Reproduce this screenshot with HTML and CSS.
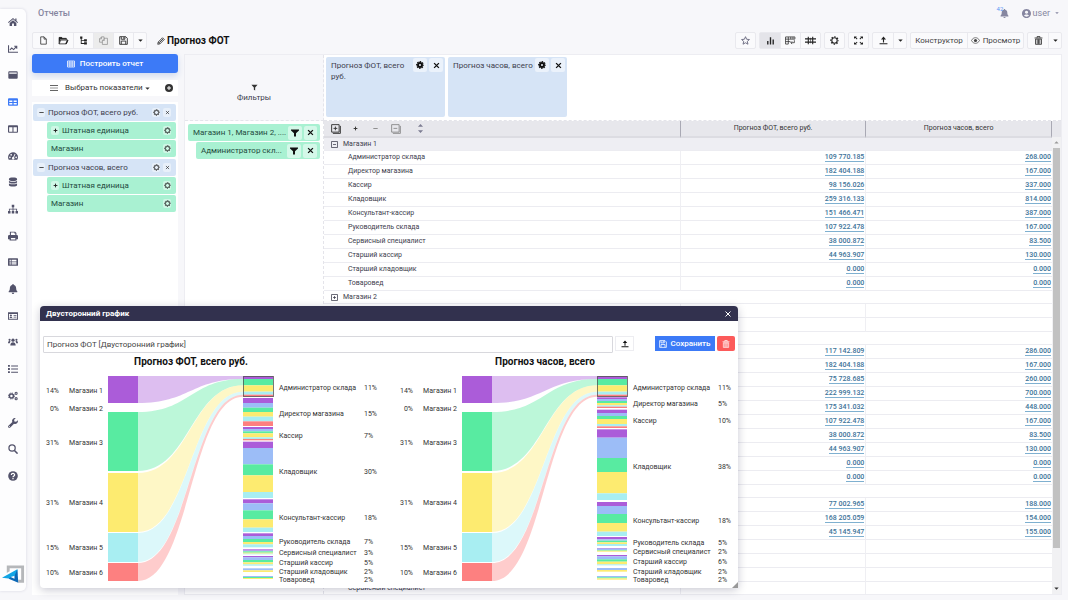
FILE: index.html
```html
<!DOCTYPE html>
<html lang="ru">
<head>
<meta charset="utf-8">
<title>Отчеты</title>
<link rel="stylesheet" href="styles.css">
</head>
<body>
<svg class="sprite" aria-hidden="true">
  <symbol id="home" viewBox="0 0 16 16"><path d="M8 1.6 0 8.3l1 1.2L8 3.7l7 5.8 1-1.2-2.4-2V2.2h-2v2.4zM8 5 2.6 9.5V14.500h3.900v-4h3v4h3.900V9.500z"/></symbol>
  <symbol id="line" viewBox="0 0 16 16"><path d="M0 2h1.700v10.300H16V14H0z"/><path fill="none" stroke="currentColor" stroke-width="1.700" d="m3 9.500 3-3 3 2.500 4-4.500M10 3.500h4v4"/></symbol>
  <symbol id="window" viewBox="0 0 16 16"><path fill-rule="evenodd" d="M2 2h12a1.500 1.500 0 0 1 1.500 1.500v9A1.500 1.500 0 0 1 14 14H2a1.500 1.500 0 0 1-1.500-1.500v-9A1.500 1.500 0 0 1 2 2zm0 2v2h12V4z"/></symbol>
  <symbol id="table" viewBox="0 0 16 16"><path fill-rule="evenodd" d="M1.500 2h13A1.500 1.500 0 0 1 16 3.500v9a1.500 1.500 0 0 1-1.500 1.500h-13A1.500 1.500 0 0 1 0 12.500v-9A1.500 1.500 0 0 1 1.500 2zM2 5.500v2.300h5V5.500zm7 0v2.300h5V5.500zm-7 4V12h5V9.500zm7 0V12h5V9.500z"/></symbol>
  <symbol id="columns" viewBox="0 0 16 16"><path fill-rule="evenodd" d="M1.500 2h13A1.500 1.500 0 0 1 16 3.500v9a1.500 1.500 0 0 1-1.500 1.500h-13A1.500 1.500 0 0 1 0 12.500v-9A1.500 1.500 0 0 1 1.500 2zM1.800 5v7.300h5.300V5zm7 0v7.300h5.400V5z"/></symbol>
  <symbol id="gauge" viewBox="0 0 16 16"><path fill-rule="evenodd" d="M8 2a8 8 0 0 1 8 8 8 8 0 0 1-1.200 4H1.200A8 8 0 0 1 8 2zM3 8.800a1.200 1.200 0 1 0 .1 0zM5 4.800a1.200 1.200 0 1 0 .1 0zM13 8.800a1.200 1.200 0 1 0 .1 0zM10.800 4.500 8.300 9.500a2 2 0 1 0 1.300.5l2.300-5z"/></symbol>
  <symbol id="db" viewBox="0 0 16 16"><path d="M1.500 3c0-3 13-3 13 0v1.300c0 2.600-13 2.600-13 0zM1.500 6.200c3 1.800 10 1.800 13 0v2.300c0 2.600-13 2.600-13 0zM1.500 10.400c3 1.800 10 1.800 13 0V13c0 3-13 3-13 0z"/></symbol>
  <symbol id="sitemap" viewBox="0 0 16 16"><path d="M6 1h4v4H6zM0 11h4v4H0zM6 11h4v4H6zM12 11h4v4h-4zM7.300 5h1.400v6H7.300zM1.500 7.500h13V11h-1.300V8.900H2.800V11H1.500z"/></symbol>
  <symbol id="print" viewBox="0 0 16 16"><path fill-rule="evenodd" d="M3 1h8.500L13.500 3v3.500H14a2 2 0 0 1 2 2V13h-2.500v2h-11v-2H0V8.500a2 2 0 0 1 2-2h1zm1.700 1.500v4h7V4H10.200V2.500zm0 8.500v2.500h7V11z"/></symbol>
  <symbol id="listbox" viewBox="0 0 16 16"><path fill-rule="evenodd" d="M1 2h14a1 1 0 0 1 1 1v10a1 1 0 0 1-1 1H1a1 1 0 0 1-1-1V3a1 1 0 0 1 1-1zm1.500 2.500v1.800h2V4.500zm3.300 0v1.800h7.700V4.500zM2.500 7.200V9h2V7.200zm3.300 0V9h7.700V7.200zM2.500 10v1.800h2V10zm3.300 0v1.800h7.700V10z"/></symbol>
  <symbol id="bell" viewBox="0 0 16 16"><path d="M7 0h2v1.500c2.500.5 4 2.200 4 5 0 3 .8 4 1.700 5 .8 1 .3 1.800-.7 1.800H2c-1 0-1.500-.9-.7-1.800C2.200 10.500 3 9.500 3 6.500c0-2.800 1.500-4.500 4-5zM6 14h4a2 2 0 0 1-4 0z"/></symbol>
  <symbol id="idcard" viewBox="0 0 16 16"><path fill-rule="evenodd" d="M0 2h16v12H0zm1.500 2.800v7.700h13V4.800zM4.700 5.500a1.600 1.600 0 1 1-.1 0zM2.500 11c0-2 4.400-2 4.400 0zM9 6.200h4.500v1.300H9zM9 9h4.500v1.300H9z"/></symbol>
  <symbol id="users" viewBox="0 0 16 16"><circle cx="8" cy="5" r="2.600"/><circle cx="2.500" cy="4.500" r="1.700"/><circle cx="13.500" cy="4.500" r="1.700"/><path d="M3.700 13.500c0-7 8.600-7 8.600 0zM0 10c0-4 3-4 4.300-2.700C3.300 8 3 9 2.800 10zM16 10c0-4-3-4-4.300-2.700 1 .7 1.300 1.700 1.500 2.700z"/></symbol>
  <symbol id="list" viewBox="0 0 16 16"><path d="M0 1.500h3v3H0zM0 6.500h3v3H0zM0 11.500h3v3H0zM5 2.300h11v1.500H5zM5 7.300h11v1.500H5zM5 12.300h11v1.500H5z"/></symbol>
  <symbol id="cogs" viewBox="0 0 16 16"><circle cx="5.500" cy="8" r="3.200" fill="none" stroke="currentColor" stroke-width="2.400"/><circle cx="5.500" cy="8" r="4.800" fill="none" stroke="currentColor" stroke-width="1.600" stroke-dasharray="1.900 1.870"/><circle cx="13" cy="3.700" r="1.700" fill="none" stroke="currentColor" stroke-width="1.700"/><circle cx="13" cy="12.300" r="1.700" fill="none" stroke="currentColor" stroke-width="1.700"/></symbol>
  <symbol id="wrench" viewBox="0 0 16 16"><path fill-rule="evenodd" d="M15.700 3.600A4.500 4.500 0 0 1 9.600 9l-6 6.200a2 2 0 0 1-2.900-2.800l6.200-6A4.500 4.500 0 0 1 12.400.3L9.800 2.900l.4 2.800 2.800.4zM2.200 12.900a.8.800 0 1 0 .1 0z"/></symbol>
  <symbol id="search" viewBox="0 0 16 16"><circle cx="6.500" cy="6.500" r="5" fill="none" stroke="currentColor" stroke-width="2"/><path stroke="currentColor" stroke-width="2.500" d="m10.300 10.300 5 5"/></symbol>
  <symbol id="help" viewBox="0 0 16 16"><circle cx="8" cy="8" r="7.700"/><path fill="none" stroke="#fff" stroke-width="2" d="M5.300 6.300c.2-3.200 5.500-3 5.300.1C10.500 8 8 8 8 10M8 11.200v2"/></symbol>
  <symbol id="file" viewBox="0 0 16 16"><path fill="none" stroke="currentColor" stroke-width="1.300" d="M3 1.500h6l4 4v9H3zM9 1.500v4h4"/></symbol>
  <symbol id="folder" viewBox="0 0 18 16"><path fill="none" stroke="currentColor" stroke-width="1.400" d="M1.200 14V2.500h4.500L7 4.200h7V7M1.200 14 4 7.200h13L14 14z"/><path d="M1 2h5l1.300 2H14v2H3.500L1 12zM12 14l3-6.500h2.500L14.500 14z"/></symbol>
  <symbol id="tree" viewBox="0 0 16 16"><path d="M2 1h4v4H4.700v2H9V5.800h5v4H9V8.600H4.700v4H9v-1.300h5v4H9V14H3.200V5H2z"/></symbol>
  <symbol id="copy" viewBox="0 0 16 16"><path fill="none" stroke="currentColor" stroke-width="1.200" d="M6 11H1V5l3.500-3.500H9V4M4.500 1.500V5H1M6 8l3.500-4H15v11H6zM9.500 4v4H6"/></symbol>
  <symbol id="save" viewBox="0 0 16 16"><path fill="none" stroke="currentColor" stroke-width="1.500" d="M1.200 1.200H12L14.800 4v10.800H1.200zM4 1.500v4.300h6.500V1.500M4 14.500V9h8v5.500M8.500 2v3"/></symbol>
  <symbol id="caret" viewBox="0 0 16 16"><path d="M1 4.500h14L8 12z"/></symbol>
  <symbol id="pencil" viewBox="0 0 16 16"><path fill="none" stroke="currentColor" stroke-width="1.500" d="M1.500 14.500 2.500 10 11 1.500 14.500 5 6 13.500zM3 10l3 3M5 11l7-7"/></symbol>
  <symbol id="star" viewBox="0 0 16 16"><path fill="none" stroke="currentColor" stroke-width="1.600" stroke-linejoin="round" d="m8 1.200 2 4.600 5 .5-3.800 3.300 1.200 5L8 12l-4.400 2.600 1.200-5L1 6.300l5-.5z"/></symbol>
  <symbol id="bars" viewBox="0 0 16 16"><path d="M2 9h2.400v6H2zM6.800 2h2.400v13H6.800zM11.600 6H14v9h-2.400z"/></symbol>
  <symbol id="pivot" viewBox="0 0 20 16"><path fill="none" stroke="currentColor" stroke-width="1.300" d="M1 1.500h17v4H1zM1 5v9.500h5V1.500M1 10h9M10.500 1.500v4M14.500 1.500v4M17 7.500V12h-6M13 9.500 10.500 12l2.500 2.500"/></symbol>
  <symbol id="grid" viewBox="0 0 20 16"><path fill="none" stroke="currentColor" stroke-width="2" d="M6 1v14M14 1v14M0 5h20M0 11h20"/><path stroke="currentColor" stroke-width="1" d="M10 3v10"/></symbol>
  <symbol id="gear" viewBox="0 0 16 16"><circle cx="8" cy="8" r="4.800" fill="none" stroke="currentColor" stroke-width="1.900"/><circle cx="8" cy="8" r="6.600" fill="none" stroke="currentColor" stroke-width="2" stroke-dasharray="2.600 2.583" stroke-dashoffset="1.300"/></symbol>
  <symbol id="gearbold" viewBox="0 0 16 16"><circle cx="8" cy="8" r="4" fill="none" stroke="currentColor" stroke-width="4"/><circle cx="8" cy="8" r="6.600" fill="none" stroke="currentColor" stroke-width="2.400" stroke-dasharray="3 2.183" stroke-dashoffset="1.500"/></symbol>
  <symbol id="expand" viewBox="0 0 16 16"><path d="M0 1h5L3.700 2.300l2.500 2.500L5 6 2.500 3.500 0 5zM16 1h-5l1.300 1.300-2.500 2.500L11 6l2.500-2.500L16 5zM0 15h5l-1.300-1.300 2.500-2.500L5 10l-2.500 2.500L0 11zM16 15h-5l1.300-1.300-2.500-2.500L11 10l2.500 2.500L16 11z"/></symbol>
  <symbol id="upload" viewBox="0 0 16 16"><path d="M8 1 3.500 6H7v5.500h2V6h3.500zM1 12.700h14v1.800H1z"/></symbol>
  <symbol id="eye" viewBox="0 0 18 16"><path fill="none" stroke="currentColor" stroke-width="1.400" d="M1 8c3.500-7.500 12.500-7.500 16 0-3.500 7.500-12.500 7.500-16 0z"/><circle cx="9" cy="8" r="3.200"/></symbol>
  <symbol id="trash" viewBox="0 0 16 16"><path fill="none" stroke="currentColor" stroke-width="1.400" d="M5.500 3V1h5v2M1 3.500h14M2.700 5.500h10.600v9.300H2.700zM5.700 6v8M8 6v8M10.300 6v8"/></symbol>
  <symbol id="user" viewBox="0 0 16 16"><path fill-rule="evenodd" d="M8 0a8 8 0 1 1-.1 0zM8 3a2.800 2.800 0 1 0 .1 0zM3.500 11.700c2 2.700 7 2.700 9 0C11 9 5 9 3.500 11.700z"/></symbol>
  <symbol id="menu" viewBox="0 0 16 16"><path d="M0 2.500h16v1.400H0zM0 7.300h16v1.400H0zM0 12h16v1.400H0z"/></symbol>
  <symbol id="pluscircle" viewBox="0 0 16 16"><circle cx="8" cy="8" r="8"/><path stroke="#fff" stroke-width="2" d="M8 4v8M4 8h8"/></symbol>
  <symbol id="plus" viewBox="0 0 16 16"><path stroke="currentColor" stroke-width="3" d="M8 2v12M2 8h12"/></symbol>
  <symbol id="minus" viewBox="0 0 16 16"><path stroke="currentColor" stroke-width="2.500" d="M1 8h14"/></symbol>
  <symbol id="close" viewBox="0 0 16 16"><path stroke="currentColor" stroke-width="3" d="m2.500 2.500 11 11M13.500 2.500l-11 11"/></symbol>
  <symbol id="thinclose" viewBox="0 0 16 16"><path stroke="currentColor" stroke-width="2" d="m3 3 10 10M13 3 3 13"/></symbol>
  <symbol id="funnel" viewBox="0 0 16 16"><path d="M0 1h16v2L10 8.500V15H6V8.500L0 3z"/></symbol>
  <symbol id="thinfunnel" viewBox="0 0 16 16"><path d="M1 1.500h14L9.500 8v7L6.500 13V8z"/></symbol>
  <symbol id="gridtable" viewBox="0 0 16 16"><path fill="none" stroke="currentColor" stroke-width="1.500" d="M1 2h14v12H1zM1 6h14M1 10h14M5.700 2v12M10.300 2v12"/></symbol>
  <symbol id="plusbox" viewBox="0 0 16 16"><path fill="none" stroke="currentColor" stroke-width="1.500" d="M1 1h12v12H1zM15 3v12H3M7 4v6M4 7h6"/></symbol>
  <symbol id="minusbox" viewBox="0 0 16 16"><path fill="none" stroke="currentColor" stroke-width="1.200" d="M1 1h12v12H1zM15 3v12H3M4 7h6"/></symbol>
  <symbol id="sort" viewBox="0 0 16 16"><path d="m8 0 4.500 5h-9zM8 16l4.500-5h-9z"/></symbol>
  <symbol id="collapse" viewBox="0 0 14 14"><path fill="none" stroke="currentColor" stroke-width="1.500" d="M1 1h12v12H1zM4 7h6"/></symbol>
  <symbol id="unfold" viewBox="0 0 14 14"><path fill="none" stroke="currentColor" stroke-width="1.500" d="M1 1h12v12H1zM4 7h6M7 4v6"/></symbol>
  <symbol id="brand" viewBox="0 0 24 20"><path fill="#b5b7ba" d="M5 1h18v18h-6v-3h3V4H8v3L5 9z"/><path fill="#12a5e5" d="M0 14 16 5v6l-7 2v2z"/><path fill="#0b67b5" d="m16 5 1 14-10-4 2-2 4 2v-3z"/></symbol>
</svg>

<div class="app">
  <aside class="sidebar">
    <nav class="nav" aria-label="Разделы">
      <a href="#"><svg><use href="#home"/></svg></a>
      <a href="#"><svg><use href="#line"/></svg></a>
      <a href="#"><svg><use href="#window"/></svg></a>
      <a href="#" class="current"><svg><use href="#table"/></svg></a>
      <a href="#"><svg><use href="#columns"/></svg></a>
      <a href="#"><svg><use href="#gauge"/></svg></a>
      <a href="#"><svg><use href="#db"/></svg></a>
      <a href="#"><svg><use href="#sitemap"/></svg></a>
      <a href="#"><svg><use href="#print"/></svg></a>
      <a href="#"><svg><use href="#listbox"/></svg></a>
      <a href="#"><svg><use href="#bell"/></svg></a>
      <a href="#"><svg><use href="#idcard"/></svg></a>
      <a href="#"><svg><use href="#users"/></svg></a>
      <a href="#"><svg><use href="#list"/></svg></a>
      <a href="#"><svg><use href="#cogs"/></svg></a>
      <a href="#"><svg><use href="#wrench"/></svg></a>
      <a href="#"><svg><use href="#search"/></svg></a>
      <a href="#"><svg><use href="#help"/></svg></a>
    </nav>
    <svg class="brand"><use href="#brand"/></svg>
  </aside>

  <main class="main">
    <header class="top">
      <a href="#" class="crumb">Отчеты</a>
      <div class="account">
        <button class="alerts" aria-label="Уведомления"><span class="count">42</span><svg><use href="#bell"/></svg></button>
        <button class="user"><svg><use href="#user"/></svg>user<svg class="tiny"><use href="#caret"/></svg></button>
      </div>
    </header>

    <div class="toolbar">
      <div class="group">
        <button aria-label="Новый"><svg><use href="#file"/></svg></button>
        <button aria-label="Открыть"><svg class="wide"><use href="#folder"/></svg></button>
        <button aria-label="Структура"><svg><use href="#tree"/></svg></button>
        <button aria-label="Копировать" disabled><svg><use href="#copy"/></svg></button>
        <button aria-label="Сохранить"><svg><use href="#save"/></svg></button>
        <button class="drop" aria-label="Еще"><svg><use href="#caret"/></svg></button>
      </div>
      <h1 class="title"><svg><use href="#pencil"/></svg>Прогноз ФОТ</h1>
      <div class="actions">
        <div class="group"><button class="muted" aria-label="Избранное"><svg><use href="#star"/></svg></button></div>
        <div class="group">
          <button class="active" aria-label="График"><svg><use href="#bars"/></svg></button>
          <button aria-label="Сводная"><svg class="wide"><use href="#pivot"/></svg></button>
          <button aria-label="Сетка"><svg class="wide"><use href="#grid"/></svg></button>
        </div>
        <div class="group"><button aria-label="Настройки"><svg><use href="#gear"/></svg></button></div>
        <div class="group"><button aria-label="Развернуть"><svg><use href="#expand"/></svg></button></div>
        <div class="group">
          <button aria-label="Выгрузить"><svg><use href="#upload"/></svg></button>
          <button class="drop" aria-label="Еще"><svg><use href="#caret"/></svg></button>
        </div>
        <div class="group">
          <button class="text">Конструктор</button>
          <button class="text"><svg><use href="#eye"/></svg>Просмотр</button>
        </div>
        <div class="group">
          <button aria-label="Удалить"><svg><use href="#trash"/></svg></button>
          <button class="drop" aria-label="Еще"><svg><use href="#caret"/></svg></button>
        </div>
      </div>
    </div>

    <div class="content">
      <section class="measures">
        <button class="build"><svg><use href="#gridtable"/></svg>Построить отчет</button>
        <div class="pick">
          <svg class="lines"><use href="#menu"/></svg>
          <button class="choose">Выбрать показатели<svg><use href="#caret"/></svg></button>
          <button class="add" aria-label="Добавить"><svg><use href="#pluscircle"/></svg></button>
        </div>
        <ul class="tree">
          <li class="node"><button class="chip" aria-label="Свернуть"><svg class="tiny"><use href="#minus"/></svg></button><span>Прогноз ФОТ, всего руб.</span><button class="chip" aria-label="Настроить"><svg><use href="#gear"/></svg></button><button class="chip" aria-label="Убрать"><svg class="tiny"><use href="#thinclose"/></svg></button></li>
          <li class="leaf"><button class="chip" aria-label="Развернуть"><svg class="tiny"><use href="#plus"/></svg></button><span>Штатная единица</span><button class="chip" aria-label="Настроить"><svg><use href="#gear"/></svg></button></li>
          <li class="leaf"><span>Магазин</span><button class="chip" aria-label="Настроить"><svg><use href="#gear"/></svg></button></li>
          <li class="node"><button class="chip" aria-label="Свернуть"><svg class="tiny"><use href="#minus"/></svg></button><span>Прогноз часов, всего</span><button class="chip" aria-label="Настроить"><svg><use href="#gear"/></svg></button><button class="chip" aria-label="Убрать"><svg class="tiny"><use href="#thinclose"/></svg></button></li>
          <li class="leaf"><button class="chip" aria-label="Развернуть"><svg class="tiny"><use href="#plus"/></svg></button><span>Штатная единица</span><button class="chip" aria-label="Настроить"><svg><use href="#gear"/></svg></button></li>
          <li class="leaf"><span>Магазин</span><button class="chip" aria-label="Настроить"><svg><use href="#gear"/></svg></button></li>
        </ul>
      </section>

      <section class="report">
        <div class="filterhead"><svg><use href="#thinfunnel"/></svg>Фильтры</div>
        <div class="cards">
          <div class="card"><span>Прогноз ФОТ, всего руб.</span><button aria-label="Настроить"><svg><use href="#gearbold"/></svg></button><button aria-label="Убрать"><svg class="x"><use href="#close"/></svg></button></div>
          <div class="card"><span>Прогноз часов, всего</span><button aria-label="Настроить"><svg><use href="#gearbold"/></svg></button><button aria-label="Убрать"><svg class="x"><use href="#close"/></svg></button></div>
        </div>
        <div class="filters">
          <div class="filter"><span>Магазин 1, Магазин 2, ....</span><button aria-label="Фильтр"><svg><use href="#funnel"/></svg></button><button aria-label="Убрать"><svg class="x"><use href="#close"/></svg></button></div>
          <div class="filter nested"><span>Администратор скл...</span><button aria-label="Фильтр"><svg><use href="#funnel"/></svg></button><button aria-label="Убрать"><svg class="x"><use href="#close"/></svg></button></div>
        </div>
        <div class="data">
          <table>
            <colgroup><col class="c1"><col class="c2"><col class="c3"></colgroup>
            <thead>
              <tr>
                <th><div class="tools">
                  <button aria-label="Развернуть все"><svg class="big"><use href="#plusbox"/></svg></button>
                  <button aria-label="Развернуть"><svg class="tiny"><use href="#plus"/></svg></button>
                  <button aria-label="Свернуть"><svg class="tiny soft"><use href="#minus"/></svg></button>
                  <button aria-label="Свернуть все"><svg class="big soft"><use href="#minusbox"/></svg></button>
                  <button aria-label="Сортировка"><svg class="sort"><use href="#sort"/></svg></button>
                </div></th>
                <th>Прогноз ФОТ, всего руб.</th>
                <th>Прогноз часов, всего</th>
              </tr>
            </thead>
            <tbody>
              <tr class="shop open"><td colspan="3"><svg><use href="#collapse"/></svg>Магазин 1</td></tr>
              <tr><td>Администратор склада</td><td><a href="#">109 770.185</a></td><td><a href="#">268.000</a></td></tr>
              <tr><td>Директор магазина</td><td><a href="#">182 404.188</a></td><td><a href="#">167.000</a></td></tr>
              <tr><td>Кассир</td><td><a href="#">98 156.026</a></td><td><a href="#">337.000</a></td></tr>
              <tr><td>Кладовщик</td><td><a href="#">259 316.133</a></td><td><a href="#">814.000</a></td></tr>
              <tr><td>Консультант-кассир</td><td><a href="#">151 466.471</a></td><td><a href="#">387.000</a></td></tr>
              <tr><td>Руководитель склада</td><td><a href="#">107 922.478</a></td><td><a href="#">167.000</a></td></tr>
              <tr><td>Сервисный специалист</td><td><a href="#">38 000.872</a></td><td><a href="#">83.500</a></td></tr>
              <tr><td>Старший кассир</td><td><a href="#">44 963.907</a></td><td><a href="#">130.000</a></td></tr>
              <tr><td>Старший кладовщик</td><td><a href="#">0.000</a></td><td><a href="#">0.000</a></td></tr>
              <tr><td>Товаровед</td><td><a href="#">0.000</a></td><td><a href="#">0.000</a></td></tr>
              <tr class="shop"><td colspan="3"><svg><use href="#unfold"/></svg>Магазин 2</td></tr>
              <tr><td></td><td></td><td></td></tr>
              <tr><td></td><td></td><td></td></tr>
              <tr class="shop"><td colspan="3"></td></tr>
              <tr><td></td><td><a href="#">117 142.809</a></td><td><a href="#">286.000</a></td></tr>
              <tr><td></td><td><a href="#">182 404.188</a></td><td><a href="#">167.000</a></td></tr>
              <tr><td></td><td><a href="#">75 728.685</a></td><td><a href="#">260.000</a></td></tr>
              <tr><td></td><td><a href="#">222 999.132</a></td><td><a href="#">700.000</a></td></tr>
              <tr><td></td><td><a href="#">175 341.032</a></td><td><a href="#">448.000</a></td></tr>
              <tr><td></td><td><a href="#">107 922.478</a></td><td><a href="#">167.000</a></td></tr>
              <tr><td></td><td><a href="#">38 000.872</a></td><td><a href="#">83.500</a></td></tr>
              <tr><td></td><td><a href="#">44 963.907</a></td><td><a href="#">130.000</a></td></tr>
              <tr><td></td><td><a href="#">0.000</a></td><td><a href="#">0.000</a></td></tr>
              <tr><td></td><td><a href="#">0.000</a></td><td><a href="#">0.000</a></td></tr>
              <tr class="shop"><td colspan="3"></td></tr>
              <tr><td></td><td><a href="#">77 002.965</a></td><td><a href="#">188.000</a></td></tr>
              <tr><td></td><td><a href="#">168 205.059</a></td><td><a href="#">154.000</a></td></tr>
              <tr><td></td><td><a href="#">45 145.947</a></td><td><a href="#">155.000</a></td></tr>
              <tr><td></td><td></td><td></td></tr>
              <tr><td></td><td></td><td></td></tr>
              <tr><td></td><td></td><td></td></tr>
              <tr><td>Сервисный специалист</td><td></td><td></td></tr>
            </tbody>
          </table>
          <div class="scroll"><svg class="up"><use href="#caret"/></svg><div class="track"><div class="thumb"></div></div><svg><use href="#caret"/></svg></div>
        </div>
      </section>
    </div>
  </main>
</div>

<section class="dialog" role="dialog" aria-labelledby="dialog-title">
  <header class="dialoghead"><h2 id="dialog-title">Двусторонний график</h2><button aria-label="Закрыть"><svg><use href="#thinclose"/></svg></button></header>
  <div class="form">
    <input type="text" aria-label="Название графика" value="Прогноз ФОТ [Двусторонний график]">
    <button class="export" aria-label="Выгрузить"><svg><use href="#upload"/></svg></button>
    <button class="store"><svg><use href="#save"/></svg>Сохранить</button>
    <button class="remove" aria-label="Удалить"><svg><use href="#trash"/></svg></button>
  </div>
  <div class="charts">
    <svg class="chart" id="payroll" viewBox="0 0 336 232"></svg>
    <svg class="chart" id="hours" viewBox="0 0 336 232"></svg>
  </div>
  <svg class="grip" viewBox="0 0 6 6"><path d="M6 0v6H0z"/></svg>
</section>
<script src="chart.js"></script>
</body>
</html>
```

FILE: styles.css
```css
* { box-sizing: border-box; }
body {
  margin: 0;
  height: 100vh;
  overflow: hidden;
  background: #f7f7fa;
  color: #3c3c4c;
  font: 8px/12px Roboto, "Liberation Sans", sans-serif;
}
button, input { font: inherit; color: inherit; }
button {
  display: inline-flex;
  align-items: center;
  justify-content: center;
  gap: 3px;
  padding: 0;
  border: 0;
  background: none;
  white-space: nowrap;
}
a { color: inherit; text-decoration: none; }
h1, h2, ul { margin: 0; padding: 0; font-size: inherit; }
svg { display: block; flex: none; width: 8px; height: 8px; fill: currentColor; }
.sprite { position: absolute; width: 0; height: 0; }

.app { display: flex; gap: 6px; height: 100vh; }
.sidebar {
  display: flex;
  flex-direction: column;
  width: 26px;
  margin: 9px 0;
  padding: 8px 0 7px;
  background: #fdfdfe;
  border-radius: 0 5px 5px 0;
  box-shadow: 0 0 3px #d4d4e0;
}
.nav {
  flex: 1;
  display: flex;
  flex-direction: column;
  align-items: center;
  justify-content: space-between;
  margin-bottom: 83px;
  color: #53536b;
}
.nav svg { width: 10px; height: 10px; }
.nav .current { color: #3c7af7; }
.brand { width: 23px; height: 20px; margin-left: 2px; }

.main { flex: 1; display: flex; flex-direction: column; min-width: 0; padding: 6px 6px 5px 0; }
.top { display: flex; justify-content: space-between; align-items: center; height: 14px; padding: 0 3px 0 6px; color: #8686a0; }
.crumb { font-size: 9px; font-weight: 500; }
.account { display: flex; gap: 13px; font-size: 9px; }
.alerts { position: relative; }
.alerts svg { width: 9px; height: 9px; }
.count { position: absolute; left: -3px; top: -1px; color: #5b95f5; font-size: 6px; line-height: 6px; }
.user { gap: 2px; }
.user svg { width: 9px; height: 9px; }
.user .tiny { width: 4px; height: 4px; margin-left: 3px; }

.toolbar { display: flex; align-items: center; gap: 10px; margin-top: 12px; color: #222; }
.group { display: flex; border: 1px solid #e9e9ee; border-radius: 2px; background: #fafafc; }
.group button { width: 20px; height: 15px; border-left: 1px solid #e9e9ee; }
.group button:first-child { border-left: 0; }
.group button:only-child { width: 19px; }
.group svg { width: 9px; height: 9px; }
.group .wide { width: 11px; height: 9px; }
.group .drop { width: 13px; }
.group .drop svg { width: 5px; height: 5px; }
.group .active { background: #e4e4e9; }
.group button:disabled { background: #ececec; color: #888; }
.group .muted { color: #65657c; }
.group .text { width: 56px; color: #444; font-size: 8px; }
.title { display: flex; align-items: center; gap: 2px; color: #111; font-size: 10px; font-weight: 700; }
.actions { display: flex; gap: 3px; margin-left: auto; }

.content { flex: 1; display: flex; gap: 6px; min-height: 0; margin-top: 5px; }
.measures { display: flex; flex-direction: column; width: 146px; }
.build {
  height: 19px;
  gap: 5px;
  background: #3c7af7;
  border-radius: 3px;
  box-shadow: 0 3px 6px #cfd9ee;
  color: #fff;
  font-weight: 500;
}
.pick { display: flex; align-items: center; gap: 7px; height: 16px; margin-top: 7px; padding: 0 5px 0 18px; background: #fff; color: #333; }
.choose { gap: 2px; }
.choose svg { width: 5px; height: 5px; }
.add { margin-left: auto; }
.tree { flex: 1; margin-top: 6px; padding: 2px 2px 0 1px; background: #fff; list-style: none; }
.tree li { display: flex; align-items: center; gap: 3px; height: 17px; margin-bottom: 1px; padding: 0 5px 0 4px; border-radius: 2px; }
.tree span { flex: 1; white-space: nowrap; }
.tree .node { background: #d6e4f6; }
.tree .leaf { margin-left: 14px; background: #a9f1d2; color: #1f4a3d; }
.leaf + .node { margin-top: 2px; }
.chip { width: 8px; height: 9px; border-radius: 2px; background: #ffffff70; color: #222; }
.chip svg { width: 7px; height: 7px; }
.chip .tiny { width: 5px; height: 5px; }

.report {
  flex: 1;
  display: grid;
  grid-template-columns: 139px 1fr;
  grid-template-rows: 66px 1fr;
  min-width: 0;
  background: #fff;
  border: 1px solid #ededf2;
}
.filterhead { display: flex; flex-direction: column; align-items: center; justify-content: center; gap: 1px; padding-top: 12px; background: #f7f7fa; border-right: 1px dashed #e4e4ea; border-bottom: 1px dashed #e4e4ea; }
.filterhead svg { width: 7px; height: 7px; color: #333; }
.cards { display: flex; gap: 3px; padding: 2px 2px 3px; border-bottom: 1px dashed #e4e4ea; }
.card { display: flex; align-items: flex-start; gap: 2px; width: 119px; padding: 1px 2px 0 5px; border-radius: 2px; background: #d6e4f6; }
.card span { flex: 1; line-height: 11px; padding-top: 2px; }
.card button, .filter button { width: 14px; height: 14px; border-radius: 2px; background: #ffffff80; color: #111; }
.card .x, .filter .x { width: 7px; height: 7px; }
.filters { padding: 3px 3px 2px; border-right: 1px dashed #e4e4ea; }
.filter { display: flex; align-items: center; gap: 2px; height: 17px; margin-bottom: 1px; padding: 0 3px 0 5px; border-radius: 2px; background: #a9f1d2; color: #1f4a3d; }
.filter span { flex: 1; white-space: nowrap; }
.nested { margin-left: 8px; }

.data { display: flex; min-width: 0; min-height: 0; overflow: hidden; }
table { flex: 1; align-self: flex-start; border-collapse: separate; border-spacing: 0; table-layout: fixed; font-size: 7px; }
.c1 { width: 49%; }
.c2 { width: 25.5%; }
.c3 { width: 25.5%; }
th { height: 17px; padding: 0; background: #e7e7ec; border-right: 1px solid #a9a9b4; border-bottom: 2px solid #dcdce2; font-weight: 400; line-height: 15px; color: #333; }
td { height: 14px; padding: 0; border-bottom: 1px solid #ececf1; border-right: 1px solid #efeff3; line-height: 13px; text-align: right; }
td:first-child { padding-left: 24px; text-align: left; }
td:nth-child(2) { padding-right: 1px; }
td:last-child { padding-right: 1px; border-right: 0; }
td a { display: inline-block; height: 10px; line-height: 10px; border-bottom: 1px solid #7fb0d0; color: #3d7399; font-weight: 500; vertical-align: middle; }
.shop td { height: 13px; line-height: 12px; }
.shop td:first-child { padding-left: 7px; }
.shop svg { display: inline-block; width: 7px; height: 7px; margin-right: 5px; vertical-align: middle; }
.open td { background: #eeeef3; }
.tools { display: flex; align-items: center; gap: 9px; padding-left: 6px; }
.tools button { width: 11px; height: 12px; }
.tools .big { width: 10px; height: 10px; }
.tools .tiny { width: 5px; height: 5px; }
.tools .soft { color: #777; }
.tools .sort { width: 9px; height: 9px; margin-left: 10px; color: #7d7d92; }
.scroll { display: flex; flex-direction: column; align-items: center; gap: 3px; width: 9px; padding: 3px 0; border-top: 16px solid #e7e7ec; background: #f1f1f3; color: #333; }
.scroll svg { width: 5px; height: 5px; }
.scroll .up { transform: rotate(180deg); color: #999; }
.track { flex: 1; align-self: stretch; padding: 0 1px; }
.thumb { height: 92%; background: #c1c1c1; }

.dialog {
  position: absolute;
  left: 40px;
  top: 306px;
  width: 698px;
  background: #fff;
  border-radius: 4px;
  box-shadow: 0 2px 10px #00003038;
}
.dialoghead { display: flex; align-items: center; justify-content: space-between; height: 15px; padding: 0 6px; border-radius: 4px 4px 0 0; background: #32314e; color: #fff; font-weight: 700; }
.form { display: flex; gap: 2px; padding: 15px 3px 0; }
.form input { flex: 1; height: 17px; padding: 0 3px; border: 1px solid #d8d8dd; border-radius: 1px; background: #fff; color: #444; }
.form button { height: 15px; }
.export { width: 19px; margin-right: 19px; border: 1px solid #ededf1; color: #111; }
.store { width: 60px; background: #3c7af7; color: #fff; font-weight: 500; }
.remove { width: 18px; border-radius: 2px; background: #fc5a5a; color: #fff; }
.charts { display: flex; gap: 18px; padding: 1px 4px 2px; }
.chart { width: 336px; height: 232px; }
.chart text { fill: #333; font-size: 7px; }
.chart .heading { fill: #111; font-size: 10px; font-weight: 700; text-anchor: middle; }
.chart .end { text-anchor: end; }
.grip { position: absolute; right: 0; bottom: 0; width: 6px; height: 6px; color: #999; }
```

FILE: chart.js
```js
const COLORS = ["#ab5cd9", "#9cbdf7", "#58eba1", "#fdeb70", "#a8eef2", "#fd8080"];
const NS = "http://www.w3.org/2000/svg";

// Left column: name, share, label centre, bar top, bar bottom, colour index.
const shops = [
  ["Магазин 1", "14%", 37, 22, 49, 0],
  ["Магазин 2", "0%", 55, 0, 0, 1],
  ["Магазин 3", "31%", 89, 58, 117, 2],
  ["Магазин 4", "31%", 149, 119, 178, 3],
  ["Магазин 5", "15%", 194, 179, 208, 4],
  ["Магазин 6", "10%", 219, 209, 227, 5]
];

// Right column: name, share, label centre, bar top, slices by shop (thirds of a unit).
const payroll = [
  ["Администратор склада", "11%", 112, 78, [9, 0, 19, 19, 9, 6]],
  ["Директор магазина", "15%", 189, 144, [15, 14, 13, 14, 14, 14]],
  ["Кассир", "7%", 254, 231, [6, 7, 6, 12, 5, 4]],
  ["Кладовщик", "30%", 362, 275, [19, 49, 33, 50, 18, 0]],
  ["Консультант-кассир", "18%", 501, 448, [12, 21, 27, 25, 13, 0]],
  ["Руководитель склада", "7%", 574, 550, [8, 9, 9, 7, 9, 0]],
  ["Сервисный специалист", "3%", 607, 598, [4, 2, 4, 3, 2, 0]],
  ["Старший кассир", "5%", 636, 618, [4, 8, 7, 6, 4, 0]],
  ["Старший кладовщик", "2%", 662, 655, [0, 6, 0, 5, 0, 0]],
  ["Товаровед", "2%", 686, 678, [0, 3, 3, 3, 0, 0]]
];
const hours = [
  ["Администратор склада", "11%", 112, 78, [9, 0, 19, 19, 9, 6]],
  ["Директор магазина", "5%", 160, 142, [5, 6, 6, 7, 4, 4]],
  ["Кассир", "10%", 209, 179, [10, 9, 9, 15, 7, 5]],
  ["Кладовщик", "38%", 347, 238, [25, 61, 42, 64, 20, 0]],
  ["Консультант-кассир", "18%", 509, 456, [12, 24, 27, 26, 13, 0]],
  ["Руководитель склада", "5%", 577, 561, [7, 4, 5, 5, 6, 0]],
  ["Сервисный специалист", "2%", 604, 594, [2, 4, 2, 3, 0, 0]],
  ["Старший кассир", "6%", 632, 615, [4, 9, 7, 8, 3, 0]],
  ["Старший кладовщик", "2%", 662, 654, [0, 6, 0, 5, 0, 0]],
  ["Товаровед", "2%", 686, 678, [0, 4, 3, 4, 0, 0]]
];

function add(svg, tag, attrs, text) {
  const el = document.createElementNS(NS, tag);
  for (const key in attrs) el.setAttribute(key, attrs[key]);
  if (text) el.textContent = text;
  svg.appendChild(el);
}

function draw(id, title, posts) {
  const svg = document.getElementById(id);
  const toY = v => v / 3 - 4;
  add(svg, "text", { x: 147, y: 11, class: "heading" }, title);

  let y = toY(posts[0][3]);
  shops.forEach(([name, share, mid, top, bottom, c]) => {
    add(svg, "text", { x: 15, y: mid + 2, class: "end" }, share);
    add(svg, "text", { x: 59, y: mid + 2, class: "end" }, name);
    if (bottom === top) return;
    const end = y + posts[0][4][c] / 3;
    add(svg, "path", {
      d: `M94 ${top}C146 ${top} 147 ${y} 199 ${y}V${end}C147 ${end} 146 ${bottom} 94 ${bottom}z`,
      fill: COLORS[c], "fill-opacity": 0.4
    });
    add(svg, "rect", { x: 64, y: top, width: 30, height: bottom - top, fill: COLORS[c] });
    y = end;
  });

  posts.forEach(([name, share, mid, top, slices]) => {
    let pos = toY(top);
    slices.forEach((size, c) => {
      if (!size) return;
      add(svg, "rect", { x: 199, y: pos, width: 30, height: size / 3, fill: COLORS[c] });
      pos += size / 3;
    });
    add(svg, "text", { x: 235, y: Math.round(toY(mid)) + 3 }, name);
    add(svg, "text", { x: 320, y: Math.round(toY(mid)) + 3 }, share);
  });
  add(svg, "rect", { x: 199.5, y: 22.5, width: 30, height: 20, fill: "none", stroke: "#555", "stroke-opacity": 0.8 });
}

draw("payroll", "Прогноз ФОТ, всего руб.", payroll);
draw("hours", "Прогноз часов, всего", hours);
```
